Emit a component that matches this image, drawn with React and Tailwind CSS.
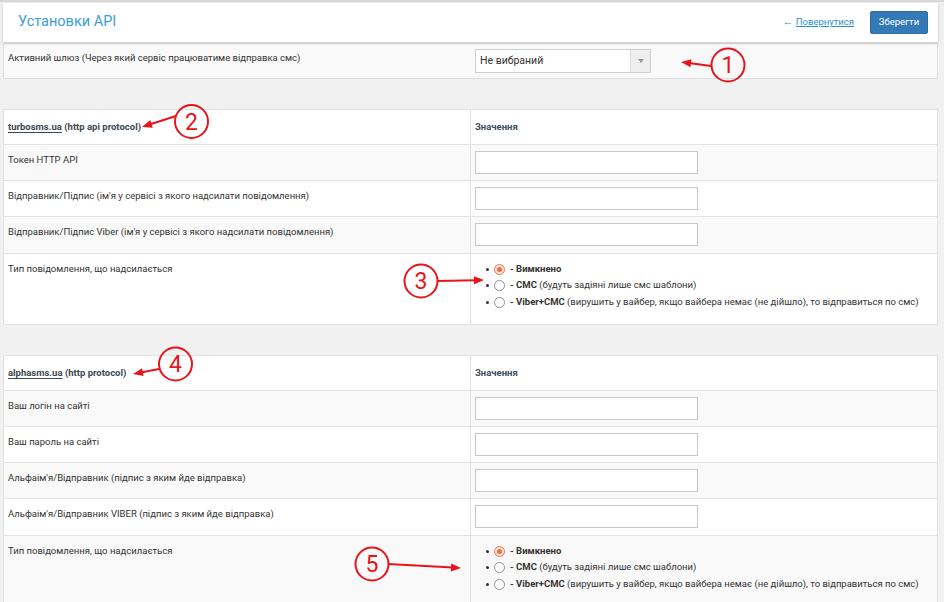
import React from "react";

function Radio({ checked }) {
  return checked ? (
    <span className="inline-flex items-center justify-center w-[11px] h-[11px] rounded-full border border-[#e5774f] bg-[#fbe3da]">
      <span className="w-[5px] h-[5px] rounded-full bg-[#ec6e45]" />
    </span>
  ) : (
    <span className="inline-block w-[11px] h-[11px] rounded-full border border-[#8f8f8f] bg-white" />
  );
}

function RadioList() {
  const items = [
    { checked: true, bold: "- Вимкнено", rest: "" },
    { checked: false, bold: "- СМС", rest: " (будуть задіяні лише смс шаблони)" },
    {
      checked: false,
      bold: "- Viber+СМС",
      rest: " (вирушить у вайбер, якщо вайбера немає (не дійшло), то відправиться по смс)",
    },
  ];
  return (
    <div className="flex flex-col gap-[4.5px] pt-[9px] pl-[11px]">
      {items.map((it, i) => (
        <div key={i} className="flex items-center h-[12px] text-[9.5px] text-[#333]">
          <span className="w-[3px] h-[3px] rounded-full bg-[#333] mr-[5px]" />
          <Radio checked={it.checked} />
          <span className="ml-[5px] whitespace-nowrap">
            <b className="font-bold">{it.bold}</b>
            {it.rest}
          </span>
        </div>
      ))}
    </div>
  );
}

function Input() {
  return <div className="w-[223px] h-[23px] border border-[#c8c8c8] bg-white" />;
}

function Row({ label, bg, h, children, topInput = true }) {
  return (
    <div className={`flex border-b border-[#e2e2e2] ${bg} ${h}`}>
      <div className="w-[467px] shrink-0 border-r border-[#e2e2e2] pl-[4px] pt-[9px] text-[9.5px] leading-[12px] text-[#333]">
        {label}
      </div>
      <div className={`flex-1 min-w-0 pl-[4px] ${topInput ? "pt-[6px]" : ""}`}>{children}</div>
    </div>
  );
}

function HeadRow({ name, proto }) {
  return (
    <div className="flex h-[35px] border-b border-[#e2e2e2] bg-white">
      <div className="w-[467px] shrink-0 border-r border-[#e2e2e2] pl-[4px] flex items-center text-[9.5px] font-bold text-[#3b4753]">
        <span className="underline underline-offset-[2px]">{name}</span>
        <span>&nbsp;{proto}</span>
      </div>
      <div className="flex-1 pl-[4px] flex items-center text-[9.5px] font-bold text-[#3b4d60]">
        Значення
      </div>
    </div>
  );
}

function Arrow({ x1, y1, x2, y2 }) {
  const dx = x2 - x1;
  const dy = y2 - y1;
  const len = Math.sqrt(dx * dx + dy * dy);
  const ux = dx / len;
  const uy = dy / len;
  const hl = 10;
  const hw = 4;
  const bx = x2 - ux * hl;
  const by = y2 - uy * hl;
  const p1 = `${x2},${y2}`;
  const p2 = `${bx - uy * hw},${by + ux * hw}`;
  const p3 = `${bx + uy * hw},${by - ux * hw}`;
  return (
    <g>
      <line x1={x1} y1={y1} x2={bx + ux * 2} y2={by + uy * 2} stroke="#e8141b" strokeWidth="2" />
      <polygon points={`${p1} ${p2} ${p3}`} fill="#e8141b" />
    </g>
  );
}

function Badge({ cx, cy, n }) {
  return (
    <g>
      <circle cx={cx} cy={cy} r="16.5" fill="none" stroke="#e8141b" strokeWidth="2" />
      <text
        x={cx}
        y={cy + 8}
        textAnchor="middle"
        fontSize="23"
        fill="#e8141b"
        fontFamily="Roboto, 'Liberation Sans', sans-serif"
      >
        {n}
      </text>
    </g>
  );
}

export default function App() {
  return (
    <div className="relative min-h-[602px] h-[602px] overflow-hidden bg-[#f1f1f1] font-['Roboto','Liberation_Sans',sans-serif]">
      <div className="h-[3px] border-t-[2px] border-[#d8d8d8]" />
      <div className="ml-[3px] w-[935px]">
        <div className="h-[39px] bg-white shadow-[0_1px_3px_rgba(0,0,0,0.18)] flex items-center justify-between pl-[15px] pr-[10px] relative z-10">
          <div className="text-[14.5px] text-[#3a9ed8] leading-none">Установки API</div>
          <div className="flex items-center">
            <span className="text-[9.5px] text-[#2a8fd4]">
              <span className="text-[11px]">←</span> <span className="underline">Повернутися</span>
            </span>
            <button className="ml-[16px] h-[23px] w-[58px] bg-[#337ab7] border border-[#2e6da4] rounded-[2px] text-white text-[9.5px]">
              Зберегти
            </button>
          </div>
        </div>

        <div className="mt-[1px] h-[36px] flex border border-[#dedede] bg-[#f9f9f9]">
          <div className="w-[467px] shrink-0 pl-[4px] pt-[8px] text-[9.5px] leading-[12px] text-[#333]">
            Активний шлюз (Через який сервіс працюватиме відправка смс)
          </div>
          <div className="flex-1 pl-[4px] pt-[5px]">
            <div className="w-[176px] h-[24px] border border-[#cfcfcf] bg-white flex">
              <div className="flex-1 pl-[4px] flex items-center text-[10.5px] text-[#333]">Не вибраний</div>
              <div className="w-[20px] bg-[#efefef] border-l border-[#dcdcdc] flex items-center justify-center">
                <span className="w-0 h-0 border-l-[3px] border-r-[3px] border-t-[4px] border-l-transparent border-r-transparent border-t-[#999]" />
              </div>
            </div>
          </div>
        </div>

        <div className="mt-[30px] border-t border-l border-r border-[#e2e2e2]">
          <HeadRow name="turbosms.ua" proto="(http api protocol)" />
          <Row label="Токен HTTP API" bg="bg-[#f9f9f9]" h="h-[36px]">
            <Input />
          </Row>
          <Row label="Відправник/Підпис (ім'я у сервісі з якого надсилати повідомлення)" bg="bg-white" h="h-[36px]">
            <Input />
          </Row>
          <Row label="Відправник/Підпис Viber (ім'я у сервісі з якого надсилати повідомлення)" bg="bg-[#f9f9f9]" h="h-[37px]">
            <Input />
          </Row>
          <Row label="Тип повідомлення, що надсилається" bg="bg-white" h="h-[71px]" topInput={false}>
            <RadioList />
          </Row>
        </div>

        <div className="mt-[30px] border-t border-l border-r border-[#e2e2e2]">
          <HeadRow name="alphasms.ua" proto="(http protocol)" />
          <Row label="Ваш логін на сайті" bg="bg-[#f9f9f9]" h="h-[36px]">
            <Input />
          </Row>
          <Row label="Ваш пароль на сайті" bg="bg-white" h="h-[36px]">
            <Input />
          </Row>
          <Row label="Альфаім'я/Відправник (підпис з яким йде відправка)" bg="bg-[#f9f9f9]" h="h-[36px]">
            <Input />
          </Row>
          <Row label="Альфаім'я/Відправник VIBER (підпис з яким йде відправка)" bg="bg-white" h="h-[37px]">
            <Input />
          </Row>
          <Row label="Тип повідомлення, що надсилається" bg="bg-[#f9f9f9]" h="h-[75px]" topInput={false}>
            <RadioList />
          </Row>
        </div>
      </div>

      <svg className="absolute left-0 top-0 pointer-events-none" width="944" height="602" viewBox="0 0 944 602">
        <Badge cx={728} cy={65} n="1" />
        <Arrow x1={711} y1={66} x2={681} y2={62} />
        <Badge cx={191.5} cy={121.5} n="2" />
        <Arrow x1={176} y1={116} x2={142} y2={127} />
        <Badge cx={421} cy={281} n="3" />
        <Arrow x1={437} y1={281} x2={484} y2={280} />
        <Badge cx={175.5} cy={364} n="4" />
        <Arrow x1={159} y1={369} x2={133} y2={374} />
        <Badge cx={372} cy={564} n="5" />
        <Arrow x1={388} y1={564} x2={461} y2={568} />
      </svg>
    </div>
  );
}
